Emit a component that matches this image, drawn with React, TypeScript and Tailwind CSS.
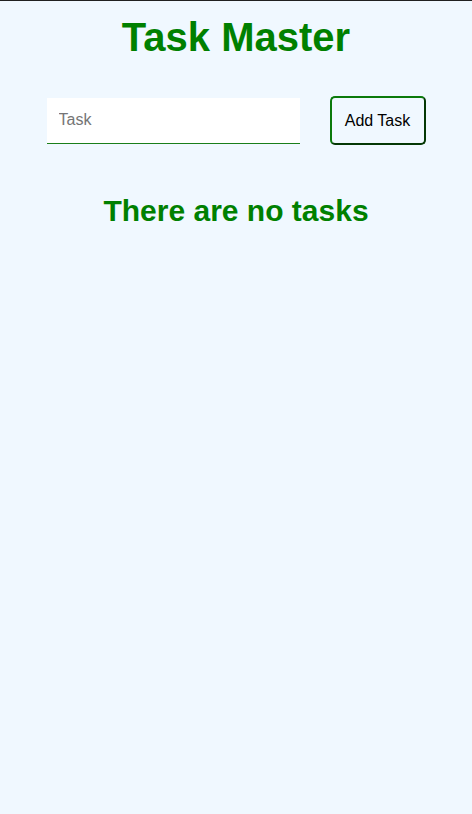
export default function App() {
  return (
    <div
      className="min-h-[814px] bg-[#f0f8ff] border-t border-[#202020] flex flex-col items-center"
      style={{ fontFamily: '"Liberation Sans", Arial, sans-serif' }}
    >
      <h1 className="text-[40px] font-bold text-[#008000] leading-none mt-[16px]">Task Master</h1>
      <div className="flex items-center gap-[30px] mt-[39px]">
        <input
          type="text"
          placeholder="Task"
          className="w-[253px] h-[46px] bg-white border-b border-[#1a7f1a] px-3 text-base text-black placeholder:text-[#757575] outline-none"
        />
        <button className="w-[96px] h-[49px] rounded-[5px] border-2 border-t-[#0b7a0b] border-l-[#0b7a0b] border-r-[#053805] border-b-[#053805] text-base text-black bg-transparent">
          Add Task
        </button>
      </div>
      <h2 className="text-[30px] font-bold text-[#008000] leading-none mt-[51px]">There are no tasks</h2>
    </div>
  );
}
